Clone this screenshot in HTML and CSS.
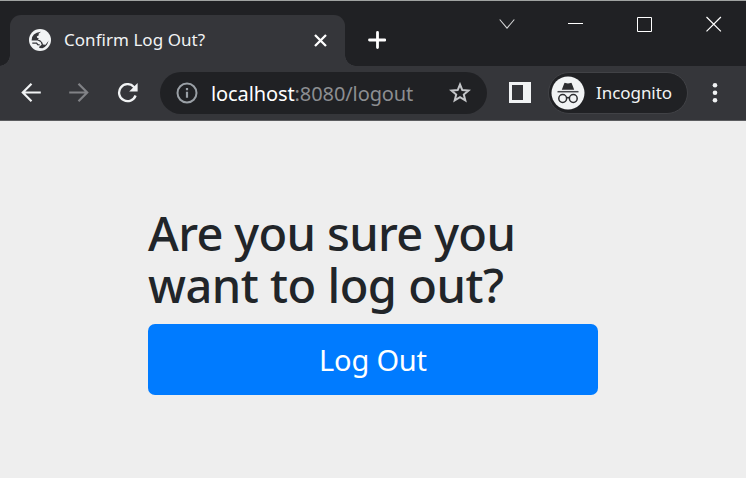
FILE: index.html
```html
<!DOCTYPE html>
<html lang="en">
<head>
<meta charset="utf-8">
<title>Confirm Log Out?</title>
<link rel="stylesheet" href="styles.css">
</head>
<body>
<div class="window">
  <header class="tabstrip">
    <div class="tab">
      <svg class="globe" width="22" height="22" viewBox="0 0 22 22"><circle cx="11" cy="11" r="11" fill="#f1f3f4"/><path d="M12 2.7 9.6 4.7 9.8 6.3 7.8 7.4 8.3 8.9H11.2L13.2 11.3 16 11.2 19.4 11.8Q18.6 17.4 13.5 19.3L10.2 19 10.4 17.4 12.7 15.7 11.6 12.9 8.6 11.5H2.6Q2.4 3.7 12 2.7Z" fill="#35363a"/><path d="M14.2 3Q19.5 5.4 19.8 11.6L16.5 15.8 14 15.6 13.3 13.4 11.2 11.3 9.3 10.7 8.9 10 10.4 8.7 13 9.2 14.6 7.7 13.2 5.8Z" fill="#f1f3f4"/><path d="M3.3 14.2H7.6L8.7 15.7 10.7 15.9" fill="none" stroke="#35363a" stroke-width="1.3"/></svg>
      <span class="tab-title">Confirm Log Out?</span>
      <svg class="tab-close" width="13" height="13" viewBox="0 0 13 13"><path d="M1 1 12 12M12 1 1 12" stroke="#fff" stroke-width="2.3"/></svg>
    </div>
    <svg class="new-tab" width="18" height="18" viewBox="0 0 18 18"><path d="M9.5 1.5V16.5M1.5 9H17" stroke="#fff" stroke-width="2.8" stroke-linecap="round"/></svg>
    <div class="controls">
      <svg width="16" height="16" viewBox="0 0 16 16"><path d="M.7 3.5 8 12.2 15.3 3.5" fill="none" stroke="#d5d6d7" stroke-width="1.1"/></svg>
      <svg width="16" height="16" viewBox="0 0 16 16"><path d="M0 7.5H15" stroke="#fff"/></svg>
      <svg width="16" height="16" viewBox="0 0 16 16"><path d="M.5 1.5H14.5V15.5H.5Z" fill="none" stroke="#fff"/></svg>
      <svg width="16" height="16" viewBox="0 0 16 16"><path d="M.5 1 14.9 15.4M14.9 1 .5 15.4" stroke="#fff" stroke-width="1.2"/></svg>
    </div>
  </header>
  <div class="toolbar">
    <nav class="nav">
      <svg width="20" height="20" viewBox="0 0 20 20"><path d="M19.8 9.5H2M10.5 .8 1.8 9.5 10.5 18.2" fill="none" stroke="#f1f3f4" stroke-width="2.2"/></svg>
      <svg width="20" height="20" viewBox="0 0 20 20"><path d="M.2 9.5H18M9.5 .8 18.2 9.5 9.5 18.2" fill="none" stroke="#818286" stroke-width="2.2"/></svg>
      <svg width="22" height="20" viewBox="0 0 22 20"><path d="M18.6 12.5A8.5 8.5 0 1 1 16.7 3.7L18.2 5.3" fill="none" stroke="#f1f3f4" stroke-width="2.3"/><path d="M20.6 0V8.4H12.2Z" fill="#f1f3f4"/></svg>
    </nav>
    <div class="address">
      <svg width="22" height="22" viewBox="0 0 22 22"><circle cx="11" cy="11" r="9.5" fill="none" stroke="#9aa0a6" stroke-width="2"/><path d="M11 9.8V15.8M11 6V8.2" stroke="#9aa0a6" stroke-width="2.2"/></svg>
      <span class="url"><b>localhost</b>:8080/logout</span>
      <svg width="22" height="21" viewBox="0 0 22 21"><path d="M11 2.5 13.3 8.1 19.5 8.5 14.8 12.5 16.3 18.4 11 15.2 5.7 18.4 7.2 12.5 2.5 8.5 8.7 8.1Z" fill="none" stroke="#c4c6c9" stroke-width="2"/></svg>
    </div>
    <svg class="panel" width="22" height="21" viewBox="0 0 22 21"><path fill="#f1f3f4" fill-rule="evenodd" d="M0 0H22V21H0ZM3 3V18H14V3Z"/></svg>
    <div class="incognito">
      <svg width="34" height="34" viewBox="0 0 34 34"><circle cx="17" cy="17" r="16.5" fill="#f1f3f4"/><path d="M10.8 13.8 13.2 7.4Q13.5 6.6 14.4 6.9L17 7.6 19.6 6.9Q20.5 6.6 20.8 7.4L23.2 13.8Z" fill="#2c2d30"/><path d="M6.5 15.7H27.5" stroke="#45464a" stroke-width="1.5"/><g fill="none" stroke="#2c2d30" stroke-width="1.5"><circle cx="11.7" cy="22.5" r="3.9"/><circle cx="22.3" cy="22.5" r="3.9"/><path d="M15.4 22.2Q17 20.9 18.6 22.2"/></g></svg>
      <span>Incognito</span>
    </div>
    <svg class="more" width="6" height="20" viewBox="0 0 6 20"><g fill="#f1f3f4"><circle cx="3" cy="2.3" r="2.3"/><circle cx="3" cy="9.7" r="2.3"/><circle cx="3" cy="17.2" r="2.3"/></g></svg>
  </div>
  <main class="page">
    <form class="logout">
      <h2>Are you sure you<br><span>want to log out?</span></h2>
      <button type="button">Log Out</button>
    </form>
  </main>
</div>
</body>
</html>
```

FILE: styles.css
```css
* { box-sizing: border-box; }
body { margin: 0; font-family: "Noto Sans", "Open Sans", sans-serif; }
svg { display: block; flex: none; }
.window { width: 746px; height: 478px; display: flex; flex-direction: column; background: #eee; overflow: hidden; }

.tabstrip { height: 66px; flex: none; display: flex; align-items: flex-start; padding: 14px 24px 0 10px; background: #202124; border-top: 1px solid #a0a3a1; }
.tab { position: relative; width: 335px; height: 51px; display: flex; align-items: center; padding: 0 18px 0 19px; background: #35363a; border-radius: 11px 11px 0 0; }
.tab::before, .tab::after { content: ""; position: absolute; bottom: 0; width: 11px; height: 11px; }
.tab::before { left: -11px; background: radial-gradient(circle at 0 0, #202124 10.5px, #35363a 11px); }
.tab::after { right: -11px; background: radial-gradient(circle at 100% 0, #202124 10.5px, #35363a 11px); }
.globe { margin-bottom: 1px; }
.tab-title { margin: 0 0 2px 13px; color: #f1f3f4; font-size: 17px; line-height: 24px; letter-spacing: 0.04px; white-space: nowrap; }
.tab-close { margin: 0 0 1px auto; }
.new-tab { margin: 16px 0 0 23px; }
.controls { display: flex; gap: 53px; margin: 1px 0 0 auto; }

.toolbar { height: 55px; flex: none; display: flex; align-items: center; padding: 0 28px 1px 21px; background: #35363a; border-bottom: 1px solid #5b5c5f; }
.nav { display: flex; gap: 28px; width: 139px; }
.address { width: 327px; height: 42px; display: flex; align-items: center; padding: 0 16px; background: #202124; border-radius: 21px; }
.url { flex: 1; margin: 2px 0 0 13px; color: #8c8e91; font-size: 20px; line-height: 30px; letter-spacing: -0.1px; white-space: nowrap; }
.url b { color: #fff; font-weight: 400; }
.panel { margin-left: 22px; }
.incognito { width: 140px; height: 42px; display: flex; align-items: center; margin-left: 17px; padding-left: 2px; background: #202124; border: 1px solid #414246; border-radius: 21px; }
.incognito span { margin-left: 11px; color: #f1f3f4; font-size: 17px; line-height: 24px; letter-spacing: -0.05px; }
.more { margin-left: 24px; }

.page { flex: 1; display: flex; justify-content: center; padding-top: 86px; }
.logout { width: 450px; }
h2 { margin: 0 0 13px; color: #212529; font-size: 47px; font-weight: 500; line-height: 52px; letter-spacing: -0.65px; white-space: nowrap; }
h2 span { letter-spacing: -0.5px; }
button { width: 450px; height: 71px; display: block; padding: 1px 0 0; border: 0; border-radius: 7px; background: #007bff; color: #fff; font: 400 29px/44px "Noto Sans", sans-serif; letter-spacing: -0.2px; }
```
